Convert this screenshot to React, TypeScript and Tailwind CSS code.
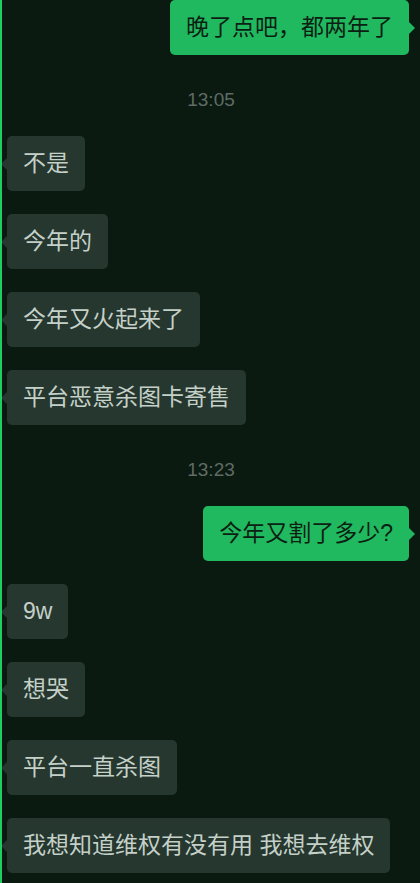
import React from 'react'

type Msg =
  | { kind: 'in'; text: string }
  | { kind: 'out'; text: string }
  | { kind: 'time'; text: string }

const messages: Msg[] = [
  { kind: 'out', text: '晚了点吧，都两年了' },
  { kind: 'time', text: '13:05' },
  { kind: 'in', text: '不是' },
  { kind: 'in', text: '今年的' },
  { kind: 'in', text: '今年又火起来了' },
  { kind: 'in', text: '平台恶意杀图卡寄售' },
  { kind: 'time', text: '13:23' },
  { kind: 'out', text: '今年又割了多少?' },
  { kind: 'in', text: '9w' },
  { kind: 'in', text: '想哭' },
  { kind: 'in', text: '平台一直杀图' },
  { kind: 'in', text: '我想知道维权有没有用 我想去维权' },
]

function Bubble({ msg, spaced }: { msg: Msg; spaced: boolean }) {
  if (msg.kind === 'time') {
    return (
      <div className="mt-[34px] mb-[25px] text-center text-[19px] leading-[22px] text-[#5f6b65]">
        {msg.text}
      </div>
    )
  }
  const out = msg.kind === 'out'
  return (
    <div className={`flex ${out ? 'justify-end pr-[11px]' : 'justify-start pl-[5px]'} ${spaced ? 'mt-[23px]' : ''}`}>
      <div
        className={`relative flex h-[55px] items-center rounded-[5px] px-4 text-[23px] leading-none ${
          out ? 'bg-[#21b95f] text-[#0c1f13]' : 'bg-[#25372e] text-[#c4d0c8]'
        }`}
      >
        {msg.text}
        {out ? (
          <span className="absolute top-1/2 -right-[6px] -mt-[6px] h-0 w-0 border-y-[6px] border-l-[6px] border-y-transparent border-l-[#21b95f]" />
        ) : (
          <span className="absolute top-1/2 -left-[6px] -mt-[6px] h-0 w-0 border-y-[6px] border-r-[6px] border-y-transparent border-r-[#25372e]" />
        )}
      </div>
    </div>
  )
}

export default function App() {
  return (
    <main
      className="flex h-[883px] w-[420px] flex-col overflow-hidden border-l-2 border-[#1fce63] bg-[#0a1a11]"
      style={{ fontFamily: '"Liberation Sans", "Noto Sans CJK SC", sans-serif' }}
    >
      {messages.map((m, i) => (
        <Bubble key={i} msg={m} spaced={i > 0 && messages[i - 1].kind !== 'time'} />
      ))}
    </main>
  )
}
